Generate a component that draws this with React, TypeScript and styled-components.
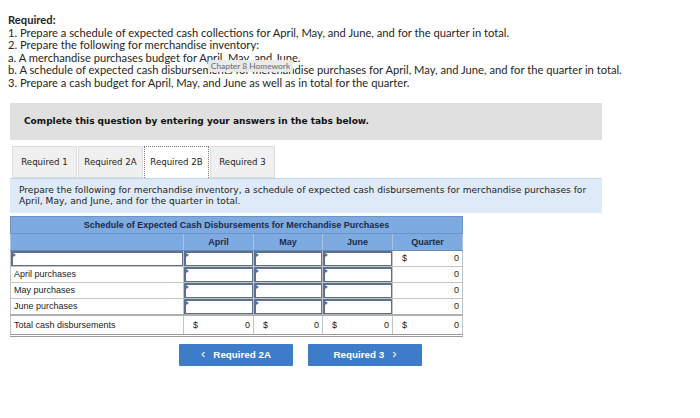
import React from "react";
import styled, { createGlobalStyle } from "styled-components";

const GlobalStyle = createGlobalStyle`
  html, body {
    margin: 0;
    padding: 0;
    background: #fff;
  }
`;

const rows = ["April purchases", "May purchases", "June purchases"];
const months = ["April", "May", "June"];

const App = () => {
  return (
    <Page>
      <GlobalStyle />
      <Requirements>
        <Strong>Required:</Strong>
        <Line>1. Prepare a schedule of expected cash collections for April, May, and June, and for the quarter in total.</Line>
        <Line>2. Prepare the following for merchandise inventory:</Line>
        <Line>a. A merchandise purchases budget for April, May, and June.</Line>
        <Line>b. A schedule of expected cash disbursements for merchandise purchases for April, May, and June, and for the quarter in total.</Line>
        <Line>3. Prepare a cash budget for April, May, and June as well as in total for the quarter.</Line>
        <Watermark>Chapter 8 Homework</Watermark>
      </Requirements>

      <Banner>Complete this question by entering your answers in the tabs below.</Banner>

      <Tabs>
        <Tab>Required 1</Tab>
        <Tab>Required 2A</Tab>
        <Tab $active>Required 2B</Tab>
        <Tab>Required 3</Tab>
      </Tabs>

      <Instructions>
        Prepare the following for merchandise inventory, a schedule of expected cash disbursements for merchandise purchases for
        <br />
        April, May, and June, and for the quarter in total.
      </Instructions>

      <Table>
        <colgroup>
          <col style={{ width: 173 }} />
          <col style={{ width: 70 }} />
          <col style={{ width: 69 }} />
          <col style={{ width: 70 }} />
          <col style={{ width: 70 }} />
        </colgroup>
        <thead>
          <tr>
            <Title colSpan={5}>Schedule of Expected Cash Disbursements for Merchandise Purchases</Title>
          </tr>
          <tr>
            <Head />
            {months.map((m) => (
              <Head key={m}>{m}</Head>
            ))}
            <Head>Quarter</Head>
          </tr>
        </thead>
        <tbody>
          <tr>
            <InputCell>
              <Marker />
            </InputCell>
            {months.map((m) => (
              <InputCell key={m}>
                <Marker />
              </InputCell>
            ))}
            <Cell>
              <Money>
                <span>$</span>
                <span>0</span>
              </Money>
            </Cell>
          </tr>
          {rows.map((r) => (
            <tr key={r}>
              <Label>{r}</Label>
              {months.map((m) => (
                <InputCell key={m}>
                  <Marker />
                </InputCell>
              ))}
              <Cell>
                <Money>
                  <span />
                  <span>0</span>
                </Money>
              </Cell>
            </tr>
          ))}
          <tr>
            <Label $total>Total cash disbursements</Label>
            {[...months, "Quarter"].map((m) => (
              <Cell key={m} $total>
                <Money>
                  <span>$</span>
                  <span>0</span>
                </Money>
              </Cell>
            ))}
          </tr>
        </tbody>
      </Table>

      <Nav>
        <NavButton>
          <Chevron>&lsaquo;</Chevron> Required 2A
        </NavButton>
        <NavButton>
          Required 3 <Chevron>&rsaquo;</Chevron>
        </NavButton>
      </Nav>
    </Page>
  );
};

export default App;

const Page = styled.div`
  width: 700px;
  height: 418px;
  padding: 14px 0 0 0;
  box-sizing: border-box;
  overflow: hidden;
`;

const Requirements = styled.div`
  position: relative;
  padding-left: 8px;
  font-family: Lato, "Open Sans", sans-serif;
  font-size: 11.2px;
  line-height: 12.6px;
  color: #262626;
`;

const Strong = styled.div`
  font-weight: 700;
`;

const Line = styled.div`
  white-space: nowrap;
`;

const Watermark = styled.div`
  position: absolute;
  left: 208px;
  top: 46px;
  width: 85px;
  height: 12px;
  background: rgba(234, 234, 234, 0.96);
  border-radius: 2px;
  color: #666;
  font-size: 8.4px;
  line-height: 12px;
  text-align: center;
`;

const Banner = styled.div`
  margin: 13px 0 0 10px;
  width: 592px;
  height: 37px;
  box-sizing: border-box;
  padding-left: 14px;
  display: flex;
  align-items: center;
  background: #e0e0e0;
  font-family: "DejaVu Sans", Verdana, sans-serif;
  font-weight: 700;
  font-size: 9px;
  color: #111;
`;

const Tabs = styled.div`
  display: flex;
  gap: 1px;
  margin: 6px 0 0 12px;
  height: 32px;
`;

const Tab = styled.div<{ $active?: boolean }>`
  width: 65px;
  box-sizing: border-box;
  display: flex;
  align-items: center;
  justify-content: center;
  font-family: "DejaVu Sans", Verdana, sans-serif;
  font-size: 8.6px;
  color: #222;
  background: ${(p) => (p.$active ? "#fff" : "#f0f0f0")};
  border: ${(p) => (p.$active ? "1px dotted #777" : "1px solid #dcdcdc")};
  border-bottom: ${(p) => (p.$active ? "none" : "1px solid #dcdcdc")};
`;

const Instructions = styled.div`
  margin: 0 0 0 10px;
  width: 592px;
  height: 35px;
  box-sizing: border-box;
  padding: 6px 9px 0 9px;
  background: #dfeaf8;
  border-top: 1px solid #c6d4e6;
  font-family: "DejaVu Sans", Verdana, sans-serif;
  font-size: 9.1px;
  line-height: 11.5px;
  color: #222;
  white-space: nowrap;
`;

const Table = styled.table`
  margin: 3px 0 0 10px;
  width: 452px;
  border-collapse: collapse;
  table-layout: fixed;
  font-family: "Liberation Sans", Arial, sans-serif;
  font-size: 9px;
  color: #222;
`;

const Title = styled.th`
  height: 16px;
  padding: 0;
  background: #7eaae2;
  border: 1px solid #6d93c4;
  color: #1b2b48;
  font-weight: 700;
  text-align: center;
`;

const Head = styled.th`
  height: 16px;
  padding: 0;
  background: #7eaae2;
  border: 1px solid #a7c3ea;
  border-bottom: 1px solid #6d8ab2;
  color: #1b2b48;
  font-weight: 700;
  text-align: center;
`;

const Label = styled.td<{ $total?: boolean }>`
  height: ${(p) => (p.$total ? "18px" : "15px")};
  padding: 0 3px;
  border: 1px solid #c4c4c4;
  border-top: ${(p) => (p.$total ? "2px solid #b0b0b0" : "1px solid #c4c4c4")};
  border-bottom: ${(p) => (p.$total ? "3px double #9a9a9a" : "1px solid #c4c4c4")};
  background: #fff;
  white-space: nowrap;
`;

const InputCell = styled.td`
  position: relative;
  height: 15px;
  padding: 0;
  background: #fff;
  border: 1px solid #c4c4c4;
  box-shadow: inset 2px 2px 0 #5d6f8e, inset -1px -1px 0 #5d6f8e;
`;

const Marker = styled.span`
  position: absolute;
  left: 2px;
  top: 2px;
  width: 0;
  height: 0;
  border-top: 2px solid transparent;
  border-bottom: 2px solid transparent;
  border-left: 3px solid #4d6f9e;
`;

const Cell = styled.td<{ $total?: boolean }>`
  height: ${(p) => (p.$total ? "18px" : "15px")};
  padding: 0 3px 0 9px;
  background: #fff;
  border: 1px solid #c4c4c4;
  border-top: ${(p) => (p.$total ? "2px solid #b0b0b0" : "1px solid #c4c4c4")};
  border-bottom: ${(p) => (p.$total ? "3px double #9a9a9a" : "1px solid #c4c4c4")};
`;

const Money = styled.div`
  display: flex;
  justify-content: space-between;
`;

const Nav = styled.div`
  display: flex;
  gap: 15px;
  margin: 7px 0 0 179px;
`;

const NavButton = styled.button`
  width: 114px;
  height: 22px;
  border: none;
  border-radius: 1px;
  background: #3c7cc8;
  color: #fff;
  font-family: "Liberation Sans", Arial, sans-serif;
  font-weight: 700;
  font-size: 9.8px;
  display: flex;
  align-items: center;
  justify-content: center;
  gap: 8px;
  padding: 0;
`;

const Chevron = styled.span`
  font-size: 13px;
  font-weight: 400;
  line-height: 1;
  margin-top: -2px;
`;
